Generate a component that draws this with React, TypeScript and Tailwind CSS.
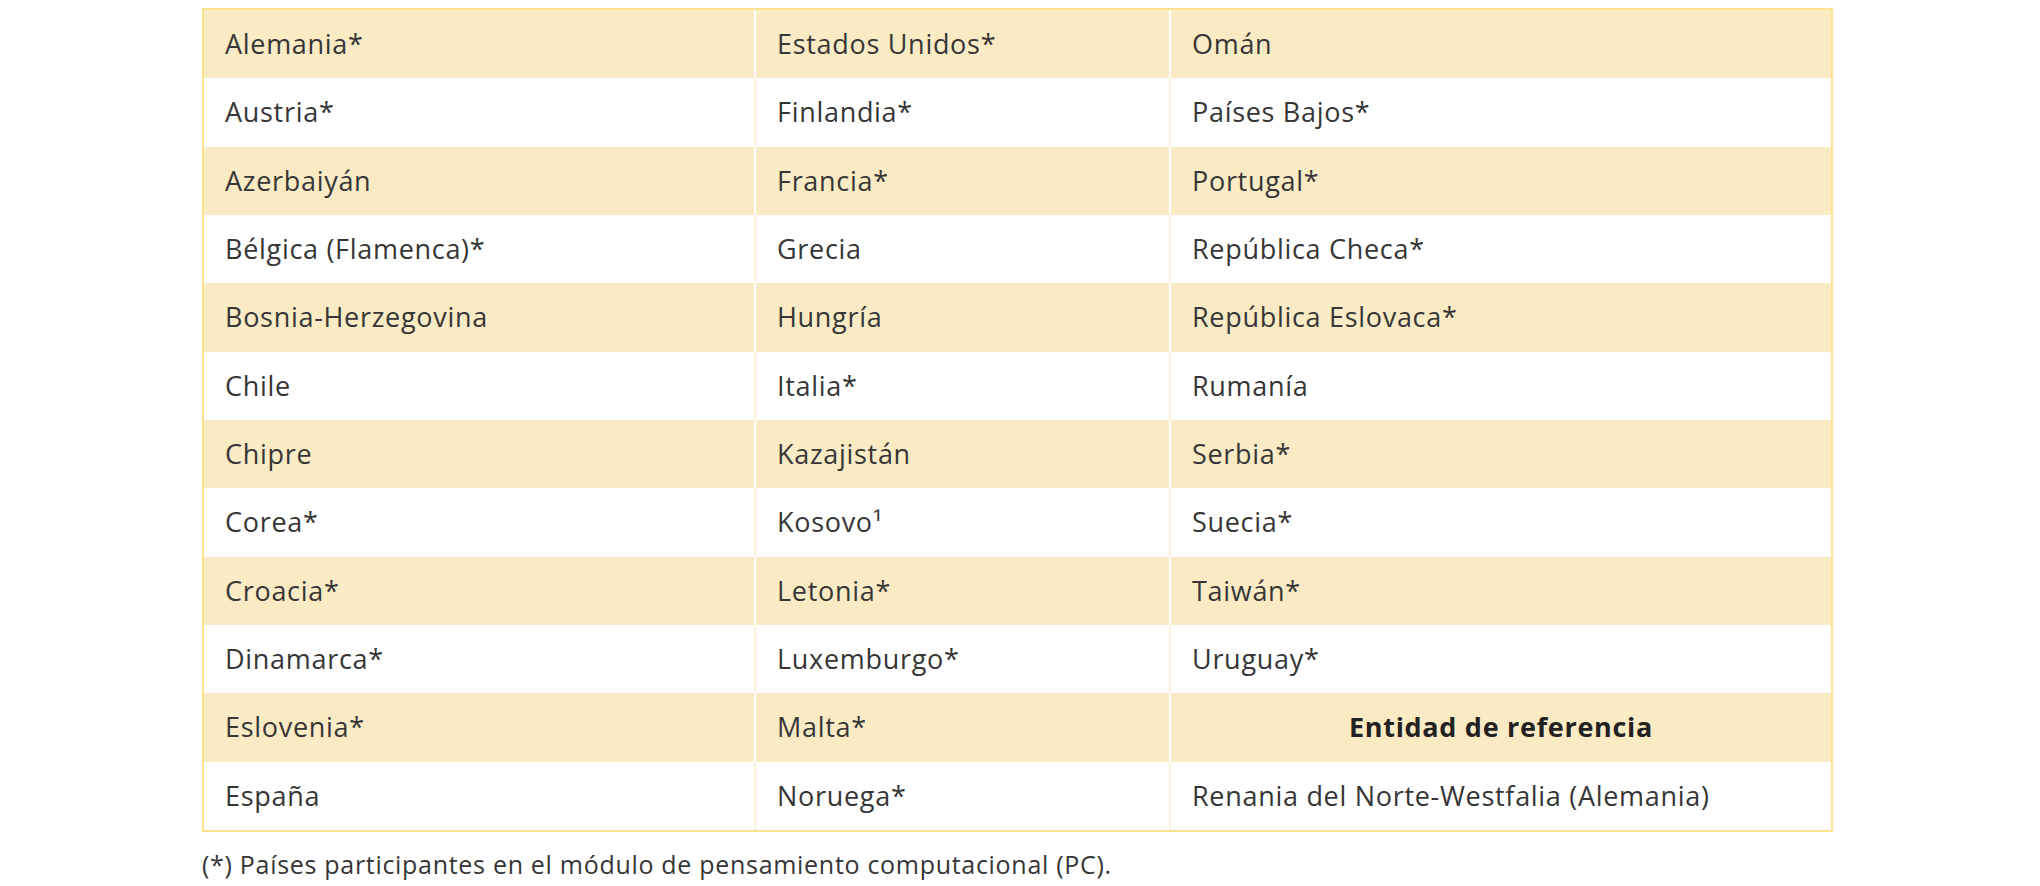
const rows: [string, string, string][] = [
  ["Alemania*", "Estados Unidos*", "Omán"],
  ["Austria*", "Finlandia*", "Países Bajos*"],
  ["Azerbaiyán", "Francia*", "Portugal*"],
  ["Bélgica (Flamenca)*", "Grecia", "República Checa*"],
  ["Bosnia-Herzegovina", "Hungría", "República Eslovaca*"],
  ["Chile", "Italia*", "Rumanía"],
  ["Chipre", "Kazajistán", "Serbia*"],
  ["Corea*", "Kosovo¹", "Suecia*"],
  ["Croacia*", "Letonia*", "Taiwán*"],
  ["Dinamarca*", "Luxemburgo*", "Uruguay*"],
  ["Eslovenia*", "Malta*", "Entidad de referencia"],
  ["España", "Noruega*", "Renania del Norte-Westfalia (Alemania)"],
];

function Cell({ text, shaded, last }: { text: string; shaded: boolean; last?: boolean }) {
  const heading = text === "Entidad de referencia";
  return (
    <div
      className={
        "flex h-[68.33px] items-center px-[21px] " +
        (shaded ? "bg-[#fbebc5] " : "bg-white ") +
        (last ? "" : shaded ? "border-r-2 border-white " : "border-r-2 border-[#fdf2d8] ") +
        (heading ? "justify-center font-bold text-[#222]" : "")
      }
    >
      {text}
    </div>
  );
}

export default function App() {
  return (
    <div className="min-h-[886px] bg-white pt-[8px] font-['Open_Sans',sans-serif] text-[#363636]">
      <div className="ml-[202px] w-[1631px]">
        <div className="grid grid-cols-[552px_415px_1fr] border-2 border-[#fde28f] text-[27px] tracking-[0.7px]">
          {rows.map((r, i) =>
            r.map((c, j) => (
              <Cell key={i + "-" + j} text={c} shaded={i % 2 === 0} last={j === 2} />
            ))
          )}
        </div>
        <p className="mt-[14px] text-[25px] tracking-[0.7px]">
          (*) Países participantes en el módulo de pensamiento computacional (PC).
        </p>
      </div>
    </div>
  );
}
